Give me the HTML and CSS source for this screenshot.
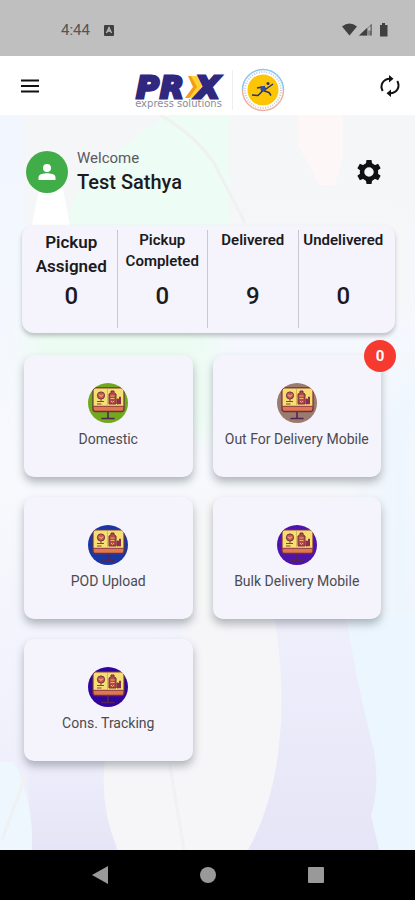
FILE: index.html
```html
<!DOCTYPE html>
<html lang="en">
<head>
<meta charset="utf-8">
<meta name="viewport" content="width=device-width, initial-scale=1">
<title>PRX Express Solutions</title>
<link rel="stylesheet" href="styles.css">
</head>
<body>
<svg class="defs" aria-hidden="true">
  <symbol id="board" viewBox="0 0 40 40">
    <path d="M20 29v6M14 35.500h12" stroke="#54264f" stroke-width="1.600" fill="none" stroke-linecap="round"/>
    <rect x="5" y="5" width="31" height="23.500" rx="2.500" fill="#e0774f" stroke="#6b3040" stroke-width="1.300"/>
    <path d="M5.700 7.500q0-2 2-2h25.600q2 0 2 2V23H5.700z" fill="#f5df72"/>
    <path d="M5.500 23.300h30" stroke="#8d3d45" stroke-width="1"/>
    <path d="M19.500 6v17" stroke="#d9b55b" stroke-width="1"/>
    <circle cx="13" cy="12.500" r="3.600" fill="#c75a50" stroke="#71303f"/>
    <path d="M11 11.500l2 2 2-2" stroke="#f5df72" fill="none"/>
    <path d="M9 18.500h7M9 21h4.500M13 16v3" stroke="#8b4146" stroke-width="1"/>
    <path d="M21 21V11l2-1V8h3v2l2 1v10z" fill="#b54a4c" stroke="#71303f"/>
    <path d="M22.500 13h4M22.500 15.500h4M23 18l1.500 1.500L26 18" stroke="#efb06c" fill="none"/>
    <path d="M29 21v-5h1.500v5zM31.500 21v-7h1v7z" fill="#8c2f4b" stroke="#8c2f4b"/>
  </symbol>
</svg>

<div class="status">
  <span class="status-time">4:44</span>
  <svg class="status-app" viewBox="0 0 12 12" aria-hidden="true"><rect x="1" y="1" width="10" height="11" rx="1" fill="#404040"/><path d="M3.500 9 6 3.500 8.500 9M4.500 7h3" fill="none" stroke="#bfbfbf" stroke-width="1.300"/></svg>
  <svg class="status-icons" viewBox="0 0 47 14" aria-hidden="true">
    <path d="M0 3.500Q7.500-2.500 15 3.500L7.500 12.500z" fill="#404040"/>
    <path d="M17 12.500 29.500 1v11.500z" fill="#8a8a8a"/><path d="M17 12.500 25 5v7.500zM28.500 2l1-1v11.500h-1z" fill="#404040"/><path d="M26 5.500 28.500 3v4.500H26z" fill="#bfbfbf"/>
    <path d="M38 2h2V0h3v2h2.500v11.500H38z" fill="#404040"/>
  </svg>
</div>

<header class="appbar">
  <button class="icon-btn" aria-label="Menu"><svg viewBox="0 0 24 24"><path d="M3 6.500h18M3 12h18M3 17.500h18" stroke="#111" stroke-width="2"/></svg></button>
  <div class="brand">
    <div class="logo">
      <div class="logo-name"><span>P</span><span>R</span><svg viewBox="0 0 18 24" aria-hidden="true"><path d="M3 1h7l5 10L5 23H0L8 12z" fill="#f59c1a"/><path d="M6 1h6l5 10-9 12H4L12 12z" fill="#ffd22e"/></svg><span>X</span></div>
      <div class="logo-tag">express solutions</div>
    </div>
    <svg class="seal" viewBox="0 0 44 44" aria-hidden="true">
      <path d="M1.500 22a20.500 20.500 0 0 1 41 0" fill="none" stroke="#8ac6ec" stroke-width="1.500"/>
      <path d="M1.500 22a20.500 20.500 0 0 0 41 0" fill="none" stroke="#f2b09a" stroke-width="1.500"/>
      <circle cx="22" cy="22" r="18" fill="none" stroke="#8698b8" stroke-width="2" stroke-dasharray="1 1.500" opacity=".5"/>
      <circle cx="22" cy="22" r="15.500" fill="#fcc506"/>
      <circle cx="27" cy="15.500" r="1.500" fill="#29306f"/>
      <path d="M11 27l6 .5 5-5 6 2 2 3M16 20l5-1 4 2 7-5M23 18l1 4-4 1" fill="none" stroke="#29306f" stroke-width="1.500" stroke-linejoin="round"/>
      <circle cx="22" cy="20.500" r="2.600" fill="#334b9c"/>
    </svg>
  </div>
  <button class="icon-btn" aria-label="Refresh"><svg viewBox="0 0 24 24"><path d="M4.700 17C1.500 11 5 5 12 4.700M19.300 7C22.500 13 19 19 12 19.300" fill="none" stroke="#111" stroke-width="2"/><path d="M11 1v7.500l4.500-3.800zM13 23v-7.500L8.500 19.300z" fill="#111"/></svg></button>
</header>

<main class="main">
  <svg class="backdrop" viewBox="0 0 415 735" preserveAspectRatio="none" aria-hidden="true">
    <defs>
      <linearGradient id="base" x1="0" y1="0" x2="0" y2="1"><stop offset="0" stop-color="#f1f6ff"/><stop offset=".5" stop-color="#f7f9fd"/><stop offset="1" stop-color="#ededfb"/></linearGradient>
      <linearGradient id="lav" x1="0" y1="0" x2="0" y2="1"><stop offset="0" stop-color="#f0effc"/><stop offset="1" stop-color="#e6e5f7"/></linearGradient>
      <linearGradient id="sky" x1="0" y1="0" x2="1" y2="0"><stop offset="0" stop-color="#f6f8fb"/><stop offset="1" stop-color="#ebf5fe"/></linearGradient>
      <filter id="soft" x="-20%" y="-20%" width="140%" height="140%"><feGaussianBlur stdDeviation="12"/></filter>
    </defs>
    <path fill="url(#base)" d="M0 0h415v735H0z"/>
    <path fill="#f5f6f8" d="M24 0h391v110H24z"/>
    <path fill="#f7f7f8" d="M180 100h235v100H180zM185 380h160v140H185z" filter="url(#soft)"/>
    <path fill="#fdf8f7" d="M298 0h45v40l-8 30h-16L298 30z"/>
    <path fill="#edfcf4" d="M165 0h65v112H68q0-45 62-85z"/>
    <path fill="#ecfcf3" d="M24 200h190v120H40z" filter="url(#soft)"/>
    <path fill="#fff" d="M39 74h24l7 36H32z"/>
    <path fill="url(#sky)" d="M340 400q40-100 75-160v495h-75z" filter="url(#soft)"/>
    <path fill="#ecf6fe" d="M346 500h69v235h-36l-8-35q9-25 3-65-16-60-28-135z"/>
    <path fill="url(#lav)" d="M270 500h76q12 75 28 135 6 40-3 65l8 35H240z"/>
    <path fill="url(#lav)" d="M26 630h90v105H32z"/>
    <path fill="#f6f5f8" d="M185 500h89q12 70 5 130-6 60-31 105H118q-20-45-12-100l79-10z"/>
    <path fill="#edf7fd" d="M0 647h14q20 40 18 88H0z"/>
    <path fill="none" stroke="#eff1f2" stroke-width="3" d="M160 0q35 20 54 48l31 60M170 650l14 85M26 660 2 725"/>
  </svg>

  <section class="profile">
    <span class="avatar"><svg viewBox="0 0 24 24" aria-hidden="true"><circle cx="12" cy="8" r="4" fill="#fff"/><path d="M3.500 20v-2.500C3.500 14 9 13.300 12 13.300s8.500.7 8.500 4.200V20z" fill="#fff"/></svg></span>
    <div class="who">
      <p class="hello">Welcome</p>
      <h1 class="user">Test Sathya</h1>
    </div>
    <button class="icon-btn" aria-label="Settings"><svg viewBox="0 0 24 24"><g fill="#111"><path id="tooth" d="M9.500 0h5l.8 5h-6.600z"/><use href="#tooth" transform="rotate(60 12 12)"/><use href="#tooth" transform="rotate(120 12 12)"/><use href="#tooth" transform="rotate(180 12 12)"/><use href="#tooth" transform="rotate(240 12 12)"/><use href="#tooth" transform="rotate(300 12 12)"/></g><circle cx="12" cy="12" r="7" fill="none" stroke="#111" stroke-width="4.500"/></svg></button>
  </section>

  <section class="stats">
    <div class="stat stat-large"><h2>Pickup Assigned</h2><p>0</p></div>
    <div class="stat"><h2>Pickup Completed</h2><p>0</p></div>
    <div class="stat"><h2>Delivered</h2><p>9</p></div>
    <div class="stat"><h2>Undelivered</h2><p>0</p></div>
  </section>

  <section class="tiles">
    <button class="tile"><svg class="disc green" aria-hidden="true"><use href="#board"/></svg><span>Domestic</span></button>
    <button class="tile"><svg class="disc brown" aria-hidden="true"><use href="#board"/></svg><span>Out For Delivery Mobile</span><b class="badge">0</b></button>
    <button class="tile"><svg class="disc blue" aria-hidden="true"><use href="#board"/></svg><span>POD Upload</span></button>
    <button class="tile"><svg class="disc purple" aria-hidden="true"><use href="#board"/></svg><span>Bulk Delivery Mobile</span></button>
    <button class="tile"><svg class="disc indigo" aria-hidden="true"><use href="#board"/></svg><span>Cons. Tracking</span></button>
  </section>
</main>

<nav class="sysnav">
  <button aria-label="Back"><svg viewBox="0 0 18 18"><path d="M17 0v18L1 9z" fill="#999"/></svg></button>
  <button aria-label="Home"><svg viewBox="0 0 18 18"><circle cx="9" cy="9" r="8" fill="#999"/></svg></button>
  <button aria-label="Recent apps"><svg viewBox="0 0 18 18"><rect x="1" y="1" width="16" height="16" rx="1" fill="#999"/></svg></button>
</nav>
</body>
</html>
```
FILE: styles.css
```css
* {
  box-sizing: border-box;
}

body {
  margin: 0;
  min-height: 100vh;
  display: flex;
  flex-direction: column;
  font-family: Roboto, "Liberation Sans", sans-serif;
  color: #1b1b1e;
  background: #fff;
}

h1, h2, p {
  margin: 0;
}

button {
  border: 0;
  padding: 0;
  background: none;
  font: inherit;
  color: inherit;
}

svg {
  display: block;
}

.defs {
  position: absolute;
  width: 0;
  height: 0;
}

.status {
  display: flex;
  align-items: center;
  height: 56px;
  padding: 4px 26px 0 61px;
  background: #bfbfbf;
}

.status-time {
  font-size: 15px;
  color: #555;
}

.status-app {
  width: 12px;
  height: 12px;
  margin-left: 13px;
}

.status-icons {
  width: 47px;
  height: 14px;
  margin-left: auto;
}

.appbar {
  display: flex;
  align-items: center;
  justify-content: space-between;
  height: 59px;
  padding: 0 13px 0 18px;
  background: #fff;
}

.icon-btn svg {
  width: 24px;
  height: 24px;
}

.brand {
  display: flex;
  align-items: center;
  gap: 8px;
  padding-top: 8px;
}

.logo {
  padding: 6px 10px 0 0;
  border-right: 1px solid #eee;
}

.logo-name {
  display: flex;
  align-items: center;
  gap: 1px;
  height: 22px;
  padding-left: 1px;
  font: italic 900 31px/22px "DejaVu Sans", sans-serif;
  color: #30277f;
  -webkit-text-stroke: 3px #30277f;
}

.logo-name svg {
  width: 18px;
  height: 24px;
  margin: 0 -8px 0 0;
}

.logo-tag {
  font: 10px/12px "DejaVu Sans", sans-serif;
  color: #8c8c96;
}

.seal {
  width: 44px;
  height: 44px;
}

.main {
  position: relative;
  z-index: 0;
  flex: 1;
  padding: 33px 20px 24px 22px;
}

.backdrop {
  position: absolute;
  inset: 0;
  z-index: -1;
  width: 100%;
  height: 100%;
}

.profile {
  display: flex;
  align-items: center;
  gap: 9px;
  padding: 0 14px 0 4px;
}

.avatar {
  display: grid;
  place-items: center;
  width: 42px;
  height: 42px;
  border-radius: 50%;
  background: #41ad49;
}

.avatar svg {
  width: 24px;
  height: 24px;
}

.who {
  flex: 1;
}

.hello {
  font-size: 15px;
  line-height: 20px;
  color: #5a5a5e;
}

.user {
  font-size: 20px;
  line-height: 28px;
  font-weight: 500;
}

.stats {
  display: grid;
  grid-template-columns: repeat(4, 1fr);
  height: 108px;
  margin-top: 29px;
  padding: 5px 7px 5px 4px;
  border-radius: 12px;
  background: #f5f3fc;
  box-shadow: 0 3px 4px rgba(60, 70, 70, 0.3);
}

.stat {
  display: flex;
  flex-direction: column;
  justify-content: space-between;
  text-align: center;
}

.stat + .stat {
  border-left: 1px solid #c9c8ce;
}

.stat h2 {
  font-size: 15px;
  line-height: 21px;
  font-weight: 600;
}

.stat-large h2 {
  font-size: 17px;
  line-height: 24px;
}

.stat p {
  padding-bottom: 18px;
  font-size: 24px;
  line-height: 28px;
  font-weight: 500;
}

.tiles {
  display: grid;
  grid-template-columns: 1fr 1fr;
  gap: 20px;
  margin-top: 22px;
  padding: 0 14px 0 2px;
}

.tile {
  position: relative;
  display: flex;
  flex-direction: column;
  align-items: center;
  gap: 6px;
  height: 122px;
  padding-top: 28px;
  border-radius: 10px;
  background: #f5f3fc;
  box-shadow: 0 5px 8px rgba(50, 60, 65, 0.35);
  font-size: 14px;
  line-height: 20px;
  color: #4b4b50;
  white-space: nowrap;
}

.disc {
  width: 40px;
  height: 40px;
  border-radius: 50%;
}

.green { background: #70a91d; }
.brown { background: #9b7b70; }
.blue { background: #1936a5; }
.purple { background: #5012ad; }
.indigo { background: #30069a; }

.badge {
  position: absolute;
  top: -15px;
  right: -15px;
  width: 32px;
  height: 32px;
  border-radius: 50%;
  background: #f63a30;
  font-size: 15px;
  line-height: 32px;
  text-align: center;
  color: #fff;
}

.sysnav {
  display: flex;
  align-items: center;
  justify-content: center;
  gap: 90px;
  height: 50px;
  background: #000;
}

.sysnav svg {
  width: 18px;
  height: 18px;
}
```
